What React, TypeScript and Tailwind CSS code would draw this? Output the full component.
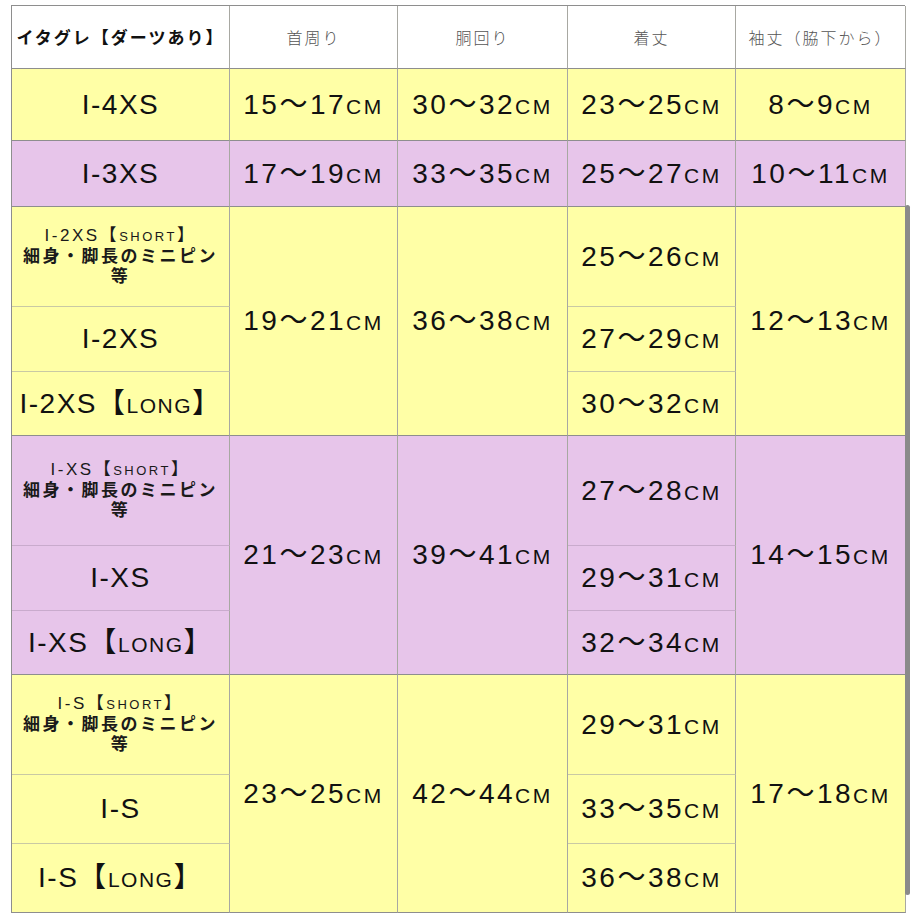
import React from "react";

type Cell = {
  text: React.ReactNode;
  bg: string;
  span?: boolean;
  kind?: "head" | "headMain" | "val" | "label" | "small";
  bottom?: string;
};

const Y = "bg-[#ffffa6]";
const P = "bg-[#e7c5ea]";
const GROUP = "border-b-[#8e8e8e]";
const SUB_Y = "border-b-[#c9c9a4]";
const SUB_P = "border-b-[#c9abcd]";

const VAL =
  "font-['Liberation_Sans','Noto_Sans_CJK_JP',sans-serif] text-[28px] tracking-[2.5px] text-[#111] whitespace-nowrap";
const LABEL =
  "font-['Liberation_Sans','Noto_Sans_CJK_JP',sans-serif] text-[28px] tracking-[1.5px] text-[#111] whitespace-nowrap";
const SMALL =
  "text-center font-['Liberation_Sans','Noto_Sans_CJK_JP',sans-serif] text-[17px] leading-[20px] tracking-[2.5px] text-[#1a1a1a]";
const HEAD =
  "font-['Noto_Sans_CJK_JP',sans-serif] text-[16px] tracking-[2px] font-light text-[#555]";
const HEAD_MAIN =
  "font-['Noto_Sans_CJK_JP',sans-serif] text-[17px] tracking-[2px] font-bold text-[#111] whitespace-nowrap";

// lowercase runs are drawn as small caps (copperplate style)
function sc(s: string, size: "big" | "small" = "big") {
  const parts = s.split(/([a-z]+)/);
  return parts.map((p, i) =>
    /^[a-z]+$/.test(p) ? (
      <span key={i} className={size === "big" ? "text-[21px]" : "text-[13px]"}>
        {p.toUpperCase()}
      </span>
    ) : (
      <React.Fragment key={i}>{p}</React.Fragment>
    )
  );
}

function shortLabel(size: string) {
  return (
    <>
      {sc(`${size}【short】`, "small")}
      <br />
      <span className="font-bold">細身・脚長のミニピン</span>
      <br />
      <span className="font-bold">等</span>
    </>
  );
}

function group(
  bg: string,
  sub: string,
  size: string,
  neck: string,
  waist: string,
  lengths: string[],
  sleeve: string
): Cell[] {
  return [
    { text: shortLabel(size), bg, kind: "small", bottom: sub },
    { text: sc(neck), bg, span: true, bottom: GROUP },
    { text: sc(waist), bg, span: true, bottom: GROUP },
    { text: sc(lengths[0]), bg, bottom: sub },
    { text: sc(sleeve), bg, span: true, bottom: GROUP },
    { text: size, bg, kind: "label", bottom: sub },
    { text: sc(lengths[1]), bg, bottom: sub },
    { text: sc(`${size}【long】`), bg, kind: "label", bottom: GROUP },
    { text: sc(lengths[2]), bg, bottom: GROUP },
  ];
}

function row(bg: string, cells: string[]): Cell[] {
  return cells.map((t, i) => ({
    text: sc(t),
    bg,
    kind: i === 0 ? "label" : "val",
    bottom: GROUP,
  }));
}

const CELLS: Cell[] = [
  { text: "イタグレ【ダーツあり】", bg: "bg-white", kind: "headMain", bottom: GROUP },
  { text: "首周り", bg: "bg-white", kind: "head", bottom: GROUP },
  { text: "胴回り", bg: "bg-white", kind: "head", bottom: GROUP },
  { text: "着丈", bg: "bg-white", kind: "head", bottom: GROUP },
  { text: "袖丈（脇下から）", bg: "bg-white", kind: "head", bottom: GROUP },
  ...row(Y, ["I-4XS", "15～17cm", "30～32cm", "23～25cm", "8～9cm"]),
  ...row(P, ["I-3XS", "17～19cm", "33～35cm", "25～27cm", "10～11cm"]),
  ...group(Y, SUB_Y, "I-2XS", "19～21cm", "36～38cm", ["25～26cm", "27～29cm", "30～32cm"], "12～13cm"),
  ...group(P, SUB_P, "I-XS", "21～23cm", "39～41cm", ["27～28cm", "29～31cm", "32～34cm"], "14～15cm"),
  ...group(Y, SUB_Y, "I-S", "23～25cm", "42～44cm", ["29～31cm", "33～35cm", "36～38cm"], "17～18cm"),
];

function textClass(kind?: Cell["kind"]) {
  switch (kind) {
    case "head":
      return HEAD;
    case "headMain":
      return HEAD_MAIN;
    case "small":
      return SMALL;
    case "label":
      return LABEL;
    default:
      return VAL;
  }
}

export default function App() {
  return (
    <div className="relative w-[920px] h-[920px] bg-white">
      <div className="pl-[11px] pt-[5px]">
        <div className="grid w-[894px] grid-cols-[218px_168px_170px_168px_170px] grid-rows-[63px_72px_66px_100px_65px_64px_110px_65px_64px_100px_69px_69px] border-l border-t border-[#8e8e8e]">
          {CELLS.map((c, i) => (
            <div
              key={i}
              className={`flex items-center justify-center border-r border-b border-r-[#a8a8a2] ${c.bg} ${c.bottom ?? GROUP} ${c.span ? "row-span-3" : ""}`}
            >
              <span className={textClass(c.kind)}>{c.text}</span>
            </div>
          ))}
        </div>
      </div>
      {/* scrollbar thumb */}
      <div className="absolute left-[905px] top-[205px] w-[5px] h-[690px] rounded-full bg-[#8a8a8a]" />
    </div>
  );
}
